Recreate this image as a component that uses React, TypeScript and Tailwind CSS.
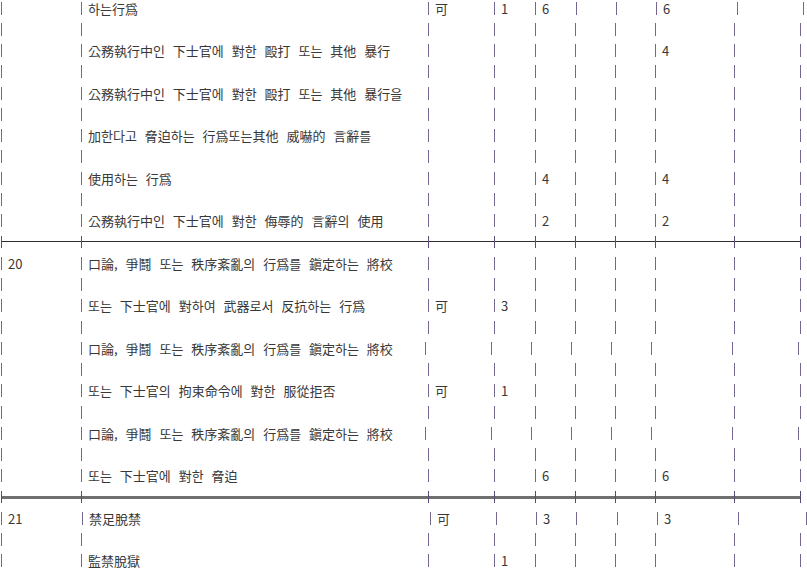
import React from 'react';

type Row =
  | { kind: 'text'; cells: string[]; widths?: string[] }
  | { kind: 'rule'; heavy?: boolean };

// widths of the nine cells between the ten bars
const W_DEFAULT = ['w-[80px]', 'w-[347px]', 'w-[66px]', 'w-[41px]', 'w-[40px]', 'w-[40px]', 'w-[40px]', 'w-[79px]', 'w-[66px]'];
const W_TOP = ['w-[80px]', 'w-[347px]', 'w-[66px]', 'w-[41px]', 'w-[41px]', 'w-[40px]', 'w-[40px]', 'w-[81px]', 'w-[66px]'];
const W_LONG = ['w-[80px]', 'w-[344px]', 'w-[66px]', 'w-[40px]', 'w-[40px]', 'w-[40px]', 'w-[40px]', 'w-[81px]', 'w-[66px]'];
const W_SHORT = ['w-[81px]', 'w-[348px]', 'w-[66px]', 'w-[40px]', 'w-[40px]', 'w-[41px]', 'w-[40px]', 'w-[81px]', 'w-[68px]'];

const ARGUE = '口論, 爭鬪 또는 秩序紊亂의 行爲를 鎭定하는 將校';
const blank: Row = { kind: 'text', cells: [] };

const ROWS: Row[] = [
  { kind: 'text', cells: ['', '하는行爲', '可', '1', '6', '', '', '6'], widths: W_TOP },
  blank,
  { kind: 'text', cells: ['', '公務執行中인 下士官에 對한 毆打 또는 其他 暴行', '', '', '', '', '', '4'] },
  blank,
  { kind: 'text', cells: ['', '公務執行中인 下士官에 對한 毆打 또는 其他 暴行을'] },
  blank,
  { kind: 'text', cells: ['', '加한다고 脅迫하는 行爲또는其他 威嚇的 言辭를'] },
  blank,
  { kind: 'text', cells: ['', '使用하는 行爲', '', '', '4', '', '', '4'] },
  blank,
  { kind: 'text', cells: ['', '公務執行中인 下士官에 對한 侮辱的 言辭의 使用', '', '', '2', '', '', '2'] },
  { kind: 'rule' },
  { kind: 'text', cells: ['20', ARGUE] },
  blank,
  { kind: 'text', cells: ['', '또는 下士官에 對하여 武器로서 反抗하는 行爲', '可', '3'] },
  blank,
  { kind: 'text', cells: ['', ARGUE], widths: W_LONG },
  blank,
  { kind: 'text', cells: ['', '또는 下士官의 拘束命令에 對한 服從拒否', '可', '1'] },
  blank,
  { kind: 'text', cells: ['', ARGUE], widths: W_LONG },
  blank,
  { kind: 'text', cells: ['', '또는 下士官에 對한 脅迫', '', '', '6', '', '', '6'] },
  { kind: 'rule', heavy: true },
  { kind: 'text', cells: ['21', '禁足脫禁', '可', '', '3', '', '', '3'], widths: W_SHORT },
  blank,
  { kind: 'text', cells: ['', '監禁脫獄', '', '1'] },
];

function Bar() {
  return <span className="h-[13px] w-px shrink-0 bg-[#75668f]" />;
}

function TextRow({ cells, widths = W_DEFAULT }: { cells: string[]; widths?: string[] }) {
  return (
    <div className="flex h-[21.27px] items-center pl-px">
      {widths.map((w, i) => (
        <div key={i} className={`flex h-full shrink-0 items-center ${w}`}>
          <Bar />
          {cells[i] ? <span className="whitespace-pre pl-[6px] [word-spacing:5px]">{cells[i]}</span> : null}
        </div>
      ))}
      <Bar />
    </div>
  );
}

function RuleRow({ heavy }: { heavy?: boolean }) {
  const line = heavy ? 'h-[3px] bg-[#707070]' : 'h-px bg-[#2e2e2e]';
  return (
    <div className="flex h-[21.27px] items-center pl-px">
      {W_DEFAULT.map((w, i) => (
        <div key={i} className={`flex h-full shrink-0 items-center ${w}`}>
          <span className="h-[12px] w-px shrink-0 bg-[#5a4a78]" />
          <span className={`flex-1 ${line}`} />
        </div>
      ))}
      <span className="h-[12px] w-px shrink-0 bg-[#5a4a78]" />
    </div>
  );
}

export default function App() {
  return (
    <div className="h-[568px] w-[807px] overflow-hidden bg-white font-['Noto_Sans_CJK_KR','Noto_Sans',sans-serif] text-[13px] leading-none text-[#383838]">
      <div className="mt-[-2.6px]">
        {ROWS.map((r, i) =>
          r.kind === 'rule' ? <RuleRow key={i} heavy={r.heavy} /> : <TextRow key={i} cells={r.cells} widths={r.widths} />
        )}
      </div>
    </div>
  );
}
